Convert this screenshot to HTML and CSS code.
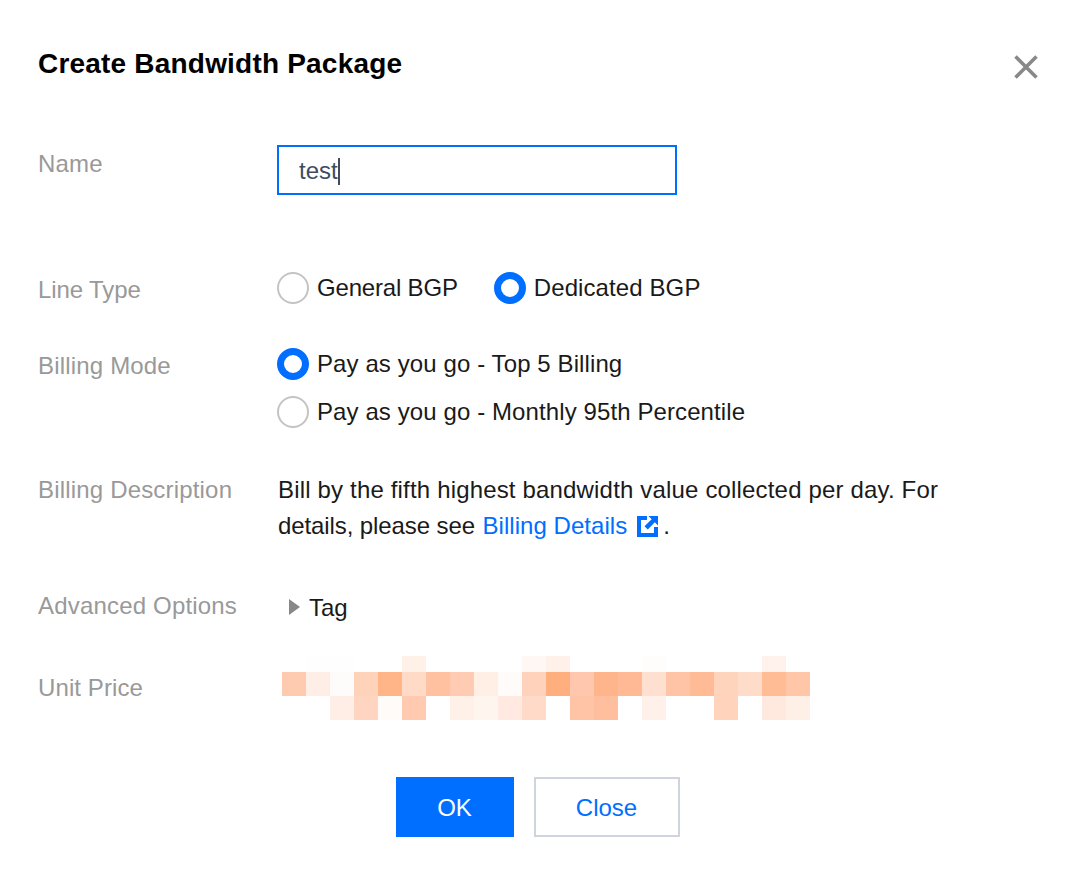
FILE: index.html
```html
<!DOCTYPE html>
<html lang="en">
<head>
  <meta charset="UTF-8">
  <meta name="viewport" content="width=device-width, initial-scale=1.0">
  <title>Create Bandwidth Package</title>
  <link rel="stylesheet" href="styles.css">
</head>
<body>

  <div class="dialog">
    <div class="dialog-head">
      <h1 class="dialog-title">Create Bandwidth Package</h1>
      <button class="close-btn" aria-label="Close">
        <svg width="26" height="26" viewBox="0 0 26 26"><path d="M2.5 2.5 L23.5 23.5 M23.5 2.5 L2.5 23.5" stroke="#888888" stroke-width="3.6" fill="none"/></svg>
      </button>
    </div>

    <div class="row row-name">
      <div class="label label-name">Name</div>
      <div class="name-input"><span class="name-text">test</span><span class="caret"></span></div>
    </div>

    <div class="row row-line">
      <div class="label label-line">Line Type</div>
      <div class="radio-inline">
        <label class="radio radio-general"><span class="dot"></span>General BGP</label>
        <label class="radio"><span class="dot dot-on"></span>Dedicated BGP</label>
      </div>
    </div>

    <div class="row row-mode">
      <div class="label">Billing Mode</div>
      <div class="radio-stack">
        <label class="radio"><span class="dot dot-on"></span>Pay as you go - Top 5 Billing</label>
        <label class="radio"><span class="dot"></span>Pay as you go - Monthly 95th Percentile</label>
      </div>
    </div>

    <div class="row row-desc">
      <div class="label">Billing Description</div>
      <div class="desc"><span class="desc-first">Bill by the fifth highest bandwidth value collected per day. For</span> details, please see <a class="link" href="#">Billing Details<svg class="ext-icon" width="21" height="21" viewBox="0 0 21 21"><path fill="#006eff" d="M0 0H10V4H4V17H17V11H21V21H0Z"/><path fill="#006eff" d="M11.5 0H21V9.5L17.8 6.3L10.8 13.5L7.5 10.2L14.7 3.2Z"/></svg></a>.</div>
    </div>

    <div class="row row-adv">
      <div class="label">Advanced Options</div>
      <div class="tag-toggle"><span class="arrow"></span>Tag</div>
    </div>

    <div class="row row-price">
      <div class="label label-price">Unit Price</div>
      <div class="mosaic">
        <i></i><i style="background:#fffefe"></i><i style="background:#fffefe"></i><i></i><i></i><i style="background:#fff0e8"></i><i></i><i></i><i></i><i></i><i style="background:#fff7f3"></i><i style="background:#fff1e9"></i><i></i><i></i><i></i><i style="background:#fffdfb"></i><i></i><i></i><i></i><i></i><i style="background:#fff1eb"></i><i></i>
        <i style="background:#ffcbb0"></i><i style="background:#ffeee6"></i><i style="background:#fefcfa"></i><i style="background:#ffd2ba"></i><i style="background:#ffb587"></i><i style="background:#ffdac7"></i><i style="background:#ffc19f"></i><i style="background:#ffcbb2"></i><i style="background:#ffefe5"></i><i style="background:#fffbf8"></i><i style="background:#ffd3bb"></i><i style="background:#ffae7e"></i><i style="background:#ffc8ae"></i><i style="background:#ffb58c"></i><i style="background:#ffb995"></i><i style="background:#ffe0d0"></i><i style="background:#ffc4a6"></i><i style="background:#ffba96"></i><i style="background:#ffd4bd"></i><i style="background:#ffdcca"></i><i style="background:#ffbc95"></i><i style="background:#ffc6a8"></i>
        <i></i><i></i><i style="background:#ffeee6"></i><i style="background:#ffd4c0"></i><i style="background:#fffbf8"></i><i style="background:#ffcab0"></i><i></i><i style="background:#fff0e8"></i><i style="background:#fff5ef"></i><i style="background:#ffe9e1"></i><i style="background:#ffdac8"></i><i></i><i style="background:#ffc3a6"></i><i style="background:#ffbe9e"></i><i></i><i style="background:#fff0e9"></i><i></i><i></i><i style="background:#ffd3bc"></i><i></i><i style="background:#ffe9df"></i><i style="background:#fff0e7"></i>
      </div>
    </div>

    <div class="dialog-foot">
      <button class="btn btn-primary">OK</button>
      <button class="btn btn-plain">Close</button>
    </div>
  </div>

</body>
</html>
```

FILE: styles.css
```css
body {
  margin: 0;
  background-color: #ffffff;
  font-family: 'Liberation Sans', Arial, sans-serif;
  font-size: 24px;
  color: #1a1a1a;
}

.dialog {
  height: 872px;
  box-sizing: border-box;
  padding: 45px 31px 0 38px;
}

.dialog-head {
  display: flex;
  justify-content: space-between;
  align-items: flex-start;
  height: 100px;
}

.dialog-title {
  margin: 0;
  font-size: 28px;
  line-height: 38px;
  font-weight: bold;
  letter-spacing: 0.2px;
  color: #000000;
}

.close-btn {
  margin-top: 9px;
  padding: 0;
  border: none;
  background: none;
  height: 26px;
  cursor: pointer;
}

.row {
  display: grid;
  grid-template-columns: 239px 1fr;
}

.row-line { margin-top: 77px; }
.row-mode { margin-top: 40px; }
.row-desc { margin-top: 44px; }
.row-adv { margin-top: 44px; }
.row-price { margin-top: 30px; }

.label {
  line-height: 36px;
  letter-spacing: 0.18px;
  color: #999999;
}

.label-name { margin-top: 1px; }
.label-line { letter-spacing: -0.1px; }
.label-price { margin-top: 14px; letter-spacing: 0.1px; }

.name-input {
  display: flex;
  align-items: center;
  box-sizing: border-box;
  width: 400px;
  height: 50px;
  padding: 2px 0 0 20px;
  border: 2px solid #006eff;
  color: #414b5f;
}

.caret {
  width: 2px;
  height: 27px;
  background-color: #414b5f;
}

.radio-inline {
  display: flex;
  gap: 36px;
}

.radio-stack {
  display: flex;
  flex-direction: column;
  gap: 16px;
}

.radio {
  display: flex;
  align-items: center;
  gap: 8px;
  height: 32px;
  line-height: 32px;
  letter-spacing: 0.1px;
}

.radio-general { letter-spacing: -0.18px; }

.dot {
  box-sizing: border-box;
  width: 32px;
  height: 32px;
  border: 2px solid #c4c4c4;
  border-radius: 50%;
  background-color: #ffffff;
}

.dot-on {
  border: 7.5px solid #006eff;
}

.desc {
  width: 680px;
  padding-left: 1px;
  line-height: 36px;
  letter-spacing: -0.1px;
}

.desc-first { letter-spacing: 0.17px; }

.link {
  margin-left: 1px;
  color: #006eff;
  letter-spacing: 0.05px;
  text-decoration: none;
}

.ext-icon {
  margin-left: 10px;
  margin-right: 5px;
  vertical-align: -3px;
}

.tag-toggle {
  display: flex;
  align-items: center;
  box-sizing: border-box;
  height: 38px;
  padding: 2px 0 0 12px;
  gap: 9px;
}

.arrow {
  width: 0;
  height: 0;
  margin-top: -2px;
  border-left: 11px solid #888888;
  border-top: 8px solid transparent;
  border-bottom: 8px solid transparent;
}

.mosaic {
  display: grid;
  grid-template-columns: repeat(22, 24px);
  grid-template-rows: 16px 24px 24px;
  margin-left: 5px;
}

.dialog-foot {
  display: flex;
  justify-content: center;
  gap: 20px;
  margin-top: 57px;
  padding-right: 2px;
}

.btn {
  height: 60px;
  padding: 2px 0 0;
  font-family: inherit;
  font-size: 24px;
  cursor: pointer;
}

.btn-primary {
  width: 118px;
  border: none;
  background-color: #006eff;
  color: #ffffff;
}

.btn-plain {
  width: 146px;
  border: 2px solid #d0d4de;
  background-color: #ffffff;
  color: #006eff;
}
```
